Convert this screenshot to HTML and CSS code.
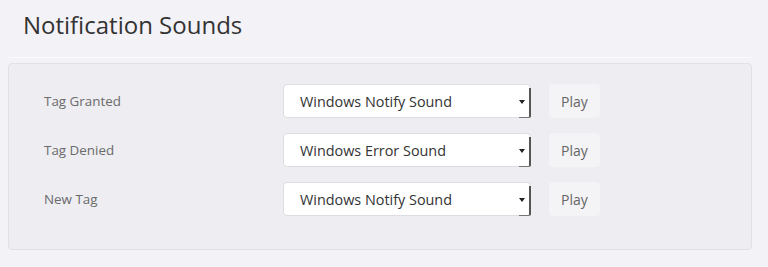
FILE: index.html
```html
<!DOCTYPE html>
<html>
<head>
<meta charset="utf-8">
<link rel="stylesheet" href="styles.css">
</head>
<body>
<div class="page">
  <h1 class="title">Notification Sounds</h1>
  <div class="panel">
    <div class="row">
      <div class="label">Tag Granted</div>
      <div class="select"><span>Windows Notify Sound</span><i class="arrow"></i></div>
      <button class="play">Play</button>
    </div>
    <div class="row">
      <div class="label">Tag Denied</div>
      <div class="select"><span>Windows Error Sound</span><i class="arrow"></i></div>
      <button class="play">Play</button>
    </div>
    <div class="row">
      <div class="label">New Tag</div>
      <div class="select"><span>Windows Notify Sound</span><i class="arrow"></i></div>
      <button class="play">Play</button>
    </div>
  </div>
</div>
</body>
</html>
```
FILE: styles.css
```css
html, body {
  margin: 0;
  padding: 0;
  background: #f3f2f7;
  font-family: "Open Sans", "Noto Sans", sans-serif;
}
.page {
  padding: 0 16px 0 8px;
}
.title {
  margin: 0;
  padding: 8px 0 0 15px;
  font-size: 24px;
  font-weight: 400;
  color: #333;
  border-bottom: 1px solid #fafafc;
  box-sizing: border-box;
  height: 58px;
}
.panel {
  margin-top: 5px;
  background: #ededf2;
  border: 1px solid #e0e0e6;
  border-radius: 4px;
  padding: 20px 35px 20px 35px;
  height: 187px;
  box-sizing: border-box;
}
.row {
  display: grid;
  grid-template-columns: 221px 248px auto;
  column-gap: 18px;
  align-items: center;
  margin-bottom: 15px;
  justify-content: start;
}
.label {
  font-size: 13.4px;
  color: #6a6a6a;
}
.select {
  position: relative;
  height: 34px;
  box-sizing: border-box;
  background: #fff;
  border: 1px solid #dcdce2;
  border-radius: 4px;
  padding: 0 16px;
  display: flex;
  align-items: center;
  font-size: 14.4px;
  color: #333;
}
.select::after {
  content: "";
  position: absolute;
  right: -1px;
  top: 3px;
  bottom: -1px;
  width: 10px;
  border-right: 2px solid #555;
  border-bottom: 1px solid #777;
  border-bottom-right-radius: 2px;
}
.arrow {
  position: absolute;
  right: 5px;
  top: 15px;
  width: 0;
  height: 0;
  border-left: 3px solid transparent;
  border-right: 3px solid transparent;
  border-top: 4px solid #222;
}
.play {
  height: 34px;
  padding: 0 12px;
  border: none;
  border-radius: 4px;
  background: #f4f3f6;
  color: #666;
  font-family: "Open Sans", "Noto Sans", sans-serif;
  font-size: 14px;
  justify-self: start;
}
```
